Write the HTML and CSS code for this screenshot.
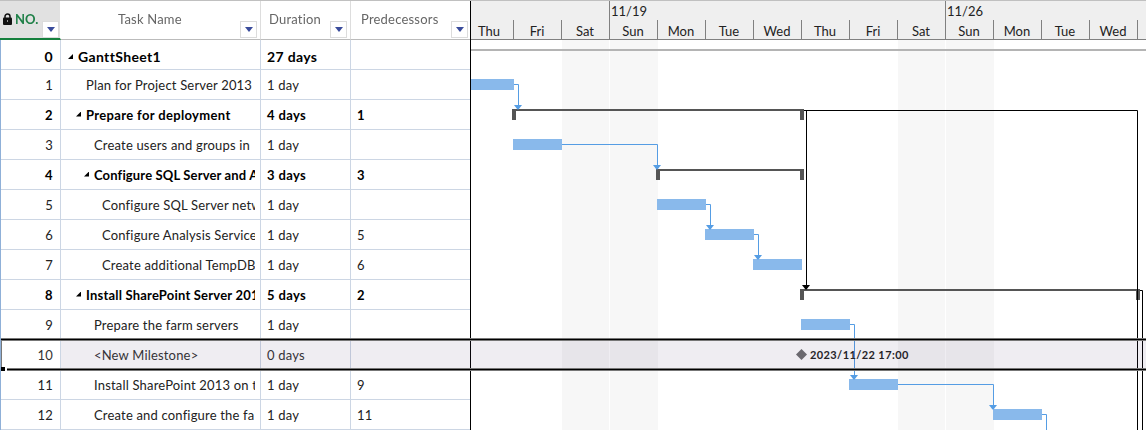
FILE: index.html
```html
<!DOCTYPE html>
<html lang="en">
<head>
  <meta charset="UTF-8">
  <title>GanttSheet1</title>
  <link rel="stylesheet" href="styles.css">
</head>
<body>
  <div class="project">
    <div class="sheet">
      <div class="sheet-head">
        <div class="head-cell head-no">
          <svg class="lock" width="9" height="12" viewBox="0 0 9 12"><path d="M2 6V3.500a2.500 2.500 0 0 1 5 0V6" fill="none" stroke="#111" stroke-width="1.500"/><rect y="4.500" width="9" height="7.500" rx="1" fill="#111"/><rect x="4" y="7" width="1" height="2" fill="#999"/></svg>
          <span class="head-text">NO.</span>
          <button class="filter"></button>
        </div>
        <div class="head-cell head-name"><span class="head-text">Task Name</span><button class="filter"></button></div>
        <div class="head-cell head-dur"><span class="head-text">Duration</span><button class="filter"></button></div>
        <div class="head-cell head-pred"><span class="head-text">Predecessors</span><button class="filter"></button></div>
      </div>
      <table class="tasks">
        <colgroup><col class="col-no"><col class="col-name"><col class="col-dur"><col class="col-pred"></colgroup>
        <tbody>
          <tr class="summary root"><td>0</td><td class="level-0"><span>GanttSheet1</span></td><td>27 days</td><td></td></tr>
          <tr><td>1</td><td class="level-1"><span>Plan for Project Server 2013</span></td><td>1 day</td><td></td></tr>
          <tr class="summary"><td>2</td><td class="level-1"><span>Prepare for deployment</span></td><td>4 days</td><td>1</td></tr>
          <tr><td>3</td><td class="level-2"><span>Create users and groups in</span></td><td>1 day</td><td></td></tr>
          <tr class="summary"><td>4</td><td class="level-2"><span>Configure SQL Server and A</span></td><td>3 days</td><td>3</td></tr>
          <tr><td>5</td><td class="level-3"><span>Configure SQL Server netw</span></td><td>1 day</td><td></td></tr>
          <tr><td>6</td><td class="level-3"><span>Configure Analysis Service</span></td><td>1 day</td><td>5</td></tr>
          <tr><td>7</td><td class="level-3"><span>Create additional TempDB</span></td><td>1 day</td><td>6</td></tr>
          <tr class="summary"><td>8</td><td class="level-1"><span>Install SharePoint Server 201</span></td><td>5 days</td><td>2</td></tr>
          <tr><td>9</td><td class="level-2"><span>Prepare the farm servers</span></td><td>1 day</td><td></td></tr>
          <tr class="selected"><td>10</td><td class="level-2"><span>&lt;New Milestone&gt;</span></td><td>0 days</td><td></td></tr>
          <tr><td>11</td><td class="level-2"><span>Install SharePoint 2013 on t</span></td><td>1 day</td><td>9</td></tr>
          <tr><td>12</td><td class="level-2"><span>Create and configure the fa</span></td><td>1 day</td><td>11</td></tr>
        </tbody>
      </table>
    </div>

    <div class="chart">
      <div class="timescale">
        <div class="weeks"><span class="week first-week"></span><span class="week">11/19</span><span class="week">11/26</span></div>
        <div class="days">
          <span class="day cut">Thu</span><span class="day">Fri</span><span class="day">Sat</span><span class="day">Sun</span><span class="day">Mon</span><span class="day">Tue</span><span class="day">Wed</span><span class="day">Thu</span><span class="day">Fri</span><span class="day">Sat</span><span class="day">Sun</span><span class="day">Mon</span><span class="day">Tue</span><span class="day">Wed</span><span class="day"></span>
        </div>
      </div>
      <svg class="bars" width="675" height="390" viewBox="471 40 675 390">
        <defs>
          <path id="arrow" d="M-4 -4.500H4L0.500 0H-0.500Z"/>
        </defs>
        <!-- weekends -->
        <g fill="#f7f7f7">
          <rect x="562" y="40" width="47" height="390"/>
          <rect x="610" y="40" width="48" height="390"/>
          <rect x="898" y="40" width="47" height="390"/>
          <rect x="946" y="40" width="48" height="390"/>
        </g>
        <rect x="471" y="49" width="675" height="2" fill="#b4b4b4"/>
        <!-- tasks -->
        <g fill="#89b9eb">
          <rect x="471" y="79" width="43" height="11"/>
          <rect x="513" y="139" width="49" height="11"/>
          <rect x="657" y="199" width="49" height="11"/>
          <rect x="705" y="229" width="49" height="11"/>
          <rect x="753" y="259" width="49" height="11"/>
          <rect x="801" y="319" width="49" height="11"/>
          <rect x="849" y="379" width="49" height="11"/>
          <rect x="993" y="409" width="49" height="11"/>
        </g>
        <!-- summaries -->
        <g fill="#555">
          <path d="M512 109H804V120H800V111H516V120H512Z"/>
          <path d="M656 169H804V180H800V171H660V180H656Z"/>
          <path d="M800 289H1140V300H1136V291H804V300H800Z"/>
        </g>
        <!-- links -->
        <g fill="none" stroke="#559de4">
          <path d="M514 84.500H518.500V108"/>
          <path d="M562 144.500H657.500V168"/>
          <path d="M706 204.500H710.500V228"/>
          <path d="M754 234.500H758.500V258"/>
          <path d="M850 324.500H854.500V378"/>
          <path d="M898 384.500H993.500V408"/>
          <path d="M1042 414.500H1046.500V430"/>
        </g>
        <g fill="#559de4">
          <use href="#arrow" x="518" y="109.500"/>
          <use href="#arrow" x="657" y="169.500"/>
          <use href="#arrow" x="710" y="229.500"/>
          <use href="#arrow" x="758" y="259.500"/>
          <use href="#arrow" x="854" y="379.500"/>
          <use href="#arrow" x="993" y="409.500"/>
        </g>
        <path d="M804 110.500H1137.500V430M806.500 110V289M1140 290.500H1142.500V430" fill="none" stroke="#000"/>
        <use href="#arrow" x="806" y="289.500"/>
        <!-- milestone -->
        <path d="M801.500 349L807 354.500L801.500 360L796 354.500Z" fill="#6e6e70"/>
        <text class="milestone-label" x="810" y="359">2023/11/22 17:00</text>
      </svg>
    </div>
    <div class="selection"></div>
  </div>
</body>
</html>
```
FILE: styles.css
```css
body {
  margin: 0;
  background-color: #fff;
  color: #222;
  font-family: Lato, "Open Sans", sans-serif;
  font-size: 13px;
  overflow: hidden;
}

.project {
  position: relative;
  display: flex;
  width: 1146px;
  height: 430px;
  box-sizing: border-box;
  border-top: 1px solid #c0c0c0;
  overflow: hidden;
}

.sheet {
  width: 470px;
  border-right: 1px solid #000;
}

.sheet-head {
  display: flex;
  height: 39px;
}

.head-cell {
  display: flex;
  align-items: flex-end;
  justify-content: flex-end;
  box-sizing: border-box;
  padding: 0 3px 1px 0;
  border-right: 1px solid #ddd;
  border-bottom: 1px solid #bbb;
  color: #666;
}

.head-text {
  flex: 1;
  align-self: flex-start;
  line-height: 18px;
  padding-top: 9px;
  letter-spacing: 0.2px;
  white-space: nowrap;
  filter: blur(0.3px);
}

.head-no {
  width: 61px;
  background-color: #e1e1e1;
  border-right: 1px solid #fff;
  border-bottom: 2px solid #15803d;
  padding: 0 1px 0 0;
}

.head-no .head-text {
  color: #1f8048;
  font-weight: bold;
  letter-spacing: 0;
  padding-left: 3px;
}

.head-name {
  width: 200px;
}

.head-name .head-text {
  padding-left: 57px;
}

.head-dur {
  width: 90px;
}

.head-dur .head-text {
  padding-left: 8px;
}

.head-pred {
  width: 119px;
  border-right: none;
  padding-right: 2px;
}

.head-pred .head-text {
  padding-left: 10px;
}

.lock {
  align-self: flex-start;
  margin: 12px 0 0 3px;
}

.filter {
  width: 17px;
  height: 17px;
  flex: none;
  padding: 0;
  margin-left: -20px;
  border: 1px solid #dcdcdc;
  background-color: #fff;
  display: flex;
  justify-content: center;
  align-items: center;
}

.filter::before {
  content: "";
  border: 4px solid transparent;
  border-top: 5px solid #3a4c9c;
  border-bottom: none;
}

.tasks {
  width: 470px;
  table-layout: fixed;
  border-collapse: separate;
  border-spacing: 0;
  border-left: 1px solid #8fb0d8;
  letter-spacing: 0.18px;
}

.col-no {
  width: 60px;
}

.col-name {
  width: 200px;
}

.col-dur {
  width: 90px;
}

.tasks td {
  box-sizing: border-box;
  height: 30px;
  padding: 1px 5px 1px 6px;
  line-height: 26px;
  border-right: 1px solid #ccd6e4;
  border-bottom: 1px solid #ccd6e4;
  white-space: nowrap;
  overflow: hidden;
}

.tasks td:first-child {
  text-align: right;
  padding-right: 7px;
}

.tasks td:last-child {
  border-right: none;
}

.tasks span {
  display: block;
  overflow: hidden;
}

.tasks .level-0 {
  padding-left: 7px;
}

.tasks .level-1 {
  padding-left: 25px;
}

.tasks .level-2 {
  padding-left: 33px;
}

.tasks .level-3 {
  padding-left: 41px;
}

.summary td {
  font-weight: bold;
  color: #000;
  letter-spacing: 0.35px;
}

.tasks .root td {
  padding-top: 4px;
  padding-bottom: 0;
  line-height: 25px;
  font-size: 14px;
  letter-spacing: 0.35px;
}

/* expand marker in front of summary names */
.summary span::before {
  content: "";
  display: inline-block;
  width: 5px;
  height: 5px;
  margin-right: 5px;
  vertical-align: 3px;
  background-color: #000;
  clip-path: polygon(100% 0, 100% 100%, 0 100%);
}

.tasks .summary .level-1 {
  padding-left: 15px;
}

.tasks .summary .level-2 {
  padding-left: 23px;
  letter-spacing: 0.15px;
}

.tasks .summary:nth-child(9) .level-1 {
  letter-spacing: 0.2px;
}

.selected td {
  color: #333;
}

.chart {
  width: 675px;
}

.timescale {
  height: 38px;
  background-color: #efefef;
  border-bottom: 1px solid #808080;
}

.weeks,
.days {
  display: flex;
  height: 19px;
}

.week {
  width: 336px;
  flex: none;
  box-sizing: border-box;
  border-left: 1px solid #808080;
  padding-left: 1px;
  line-height: 21px;
}

.first-week {
  width: 138px;
  border-left: none;
}

.day {
  width: 48px;
  flex: none;
  box-sizing: border-box;
  border-left: 1px solid #808080;
  padding-right: 1px;
  text-align: center;
  line-height: 23px;
}

.cut {
  width: 42px;
  border-left: none;
  padding-right: 6px;
}

.bars {
  display: block;
}

.milestone-label {
  font-size: 11px;
  font-weight: bold;
  letter-spacing: 0.4px;
  fill: #222;
}

/* each edge is a black line with a grey line on both sides */
.selection {
  position: absolute;
  top: 338px;
  left: 61px;
  right: 0;
  height: 29px;
  border: solid #000;
  border-width: 1px 0;
  background-color: rgba(80, 60, 110, 0.09);
  box-shadow: 0 -1px #777, 0 1px #777, inset 0 1px #777, inset 0 -1px #777;
}

.selection::before {
  content: "";
  position: absolute;
  top: -1px;
  left: -60px;
  width: 60px;
  height: 29px;
  border-top: 1px solid #000;
  border-bottom: 1px solid #000;
  box-shadow: 0 -1px #777, 0 1px #777, inset 0 1px #777, inset 0 -1px #777, inset 1px 0 #777;
}

/* drag handle */
.selection::after {
  content: "";
  position: absolute;
  top: 27px;
  left: -60px;
  width: 4px;
  height: 4px;
  background-color: #000;
  border-right: 2px solid #fff;
}
```
